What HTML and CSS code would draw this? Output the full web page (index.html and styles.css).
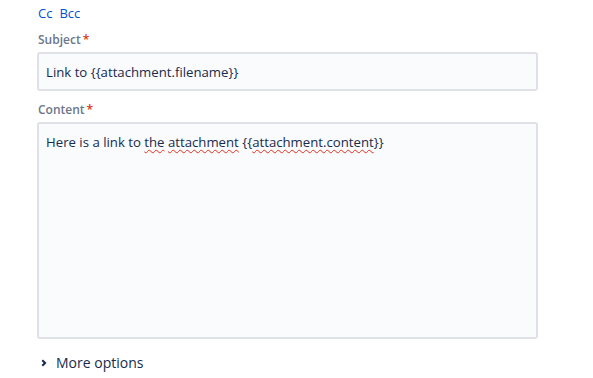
FILE: index.html
```html
<!DOCTYPE html>
<html>
<head>
<meta charset="utf-8">
<link rel="stylesheet" href="styles.css">
</head>
<body>
<div class="form">
  <div class="links"><a class="link">Cc</a><a class="link">Bcc</a></div>
  <div class="field">
    <label class="label">Subject<span class="req">*</span></label>
    <div class="input">Link to {{attachment.filename}}</div>
  </div>
  <div class="field">
    <label class="label">Content<span class="req">*</span></label>
    <div class="textarea">Here is a link to <span class="sp">the</span> <span class="sp">attachment</span> {{<span class="sp">attachment.content</span>}}</div>
  </div>
  <div class="more">
    <svg class="chev" width="8" height="8" viewBox="0 0 8 8"><path d="M2.3 1.2 L5.1 4 L2.3 6.8" fill="none" stroke="#172b4d" stroke-width="2"/></svg>
    <span>More options</span>
  </div>
</div>
</body>
</html>
```
FILE: styles.css
```css
html, body { margin: 0; padding: 0; background: #fff; }
body { font-family: "Open Sans", "Noto Sans", sans-serif; color: #172b4d; }
.form { width: 501px; margin-left: 37px; padding-top: 4px; display: flex; flex-direction: column; }
.links { display: flex; gap: 7px; font-size: 13px; line-height: 18px; color: #0052cc; padding-left: 1px; }
.link { color: #0052cc; }
.field { display: flex; flex-direction: column; margin-top: 10px; }
.field + .field { margin-top: 11px; }
.label { font-size: 12px; font-weight: 600; color: #6b778c; line-height: 16px; margin-bottom: 4px; padding-left: 1px; }
.req { color: #de350b; margin-left: 2px; }
.input { box-sizing: border-box; height: 39px; border: 2px solid #dfe1e6; border-radius: 3px; background: #fafbfc; font-size: 13.2px; line-height: 20px; padding: 8px 7px; }
.textarea { height: 217px; box-sizing: border-box; border: 2px solid #dfe1e6; border-radius: 3px; background: #fafbfc; font-size: 13.2px; line-height: 20px; padding: 8px 7px; }
.sp { text-decoration: underline wavy #e0301e; text-decoration-thickness: 1px; text-underline-offset: 2px; }
.more { display: flex; align-items: center; gap: 8px; margin-top: 14px; padding-left: 3px; font-size: 14px; font-weight: 500; line-height: 20px; }
.chev { display: block; }
```
